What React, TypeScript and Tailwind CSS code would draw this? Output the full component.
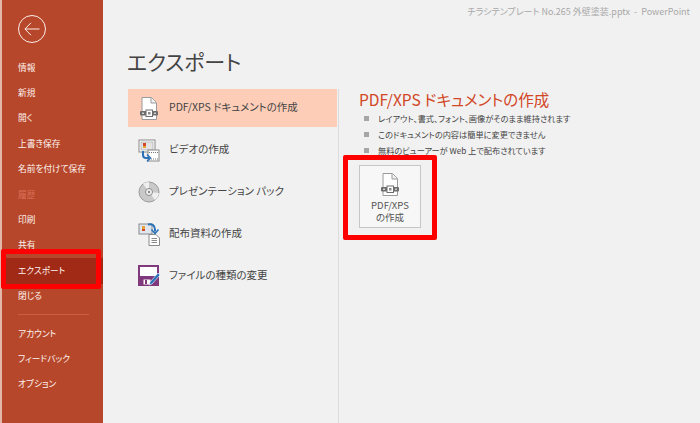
import type { ReactNode } from "react";

const font = { fontFamily: '"Noto Sans CJK JP", "Noto Sans", sans-serif' };

function PdfIcon({ w = 18 }: { w?: number }) {
  return (
    <svg width={w} height={(w * 23) / 18} viewBox="0 0 18 23" fill="none">
      <path d="M2 .5h9.500L16.500 5.500V22.500H2z" fill="#fff" stroke="#9a9a9a" />
      <path d="M11 .5v5.500h5.500" fill="#f1f1f1" stroke="#9a9a9a" />
      <rect x="0" y="14" width="18" height="4.500" rx="1" fill="#6e6e6e" />
      <rect x="6" y="13" width="6.500" height="6.500" fill="#fff" stroke="#6e6e6e" />
      <rect x="8" y="15" width="2.500" height="2.500" fill="#8a8a8a" />
      <rect x="2" y="15.700" width="2" height="1" fill="#fff" />
      <rect x="14" y="15.700" width="2" height="1" fill="#fff" />
    </svg>
  );
}

function VideoIcon() {
  return (
    <svg width="22" height="23" viewBox="0 0 22 23" fill="none">
      <rect x="1" y="1" width="16" height="12" fill="#fff" stroke="#8a8a8a" />
      <rect x="3" y="3" width="12" height="8" fill="#e4e4e4" stroke="#a8a8a8" strokeWidth=".7" />
      <rect x="5" y="4" width="3" height="3" fill="#d24726" />
      <rect x="5" y="7" width="3" height="2" fill="#e8a33d" />
      <rect x="10" y="11" width="11" height="11" fill="#fff" stroke="#8a8a8a" />
      <path d="M11 13.500h9M11 20h9" stroke="#777" strokeDasharray="1 1" />
      <path d="M5 12v4c0 2 1 3 3 3h3" stroke="#2a72b8" strokeWidth="2" />
      <path d="M9 15.500l3.500 3.500-3.500 3.500" stroke="#2a72b8" strokeWidth="1.500" />
    </svg>
  );
}

function DiscIcon() {
  return (
    <svg width="22" height="22" viewBox="0 0 22 22" fill="none">
      <circle cx="11" cy="11" r="10" fill="#c9c9c9" stroke="#9a9a9a" />
      <path d="M11 11L5 2.800A10 10 0 0 1 11 1zM11 11l10 1a10 10 0 0 1-4 7z" fill="#efefef" />
      <circle cx="11" cy="11" r="3.500" fill="#f1f1f1" stroke="#8a8a8a" />
      <circle cx="11" cy="11" r="1.200" fill="#8a8a8a" />
    </svg>
  );
}

function HandoutIcon() {
  return (
    <svg width="23" height="23" viewBox="0 0 23 23" fill="none">
      <rect x="1" y="1" width="13" height="10" fill="#dfe6ee" stroke="#8a8a8a" />
      <rect x="4" y="3" width="3" height="3" fill="#e8a33d" />
      <rect x="4" y="6" width="3" height="2" fill="#d24726" />
      <path d="M10 1.500c4-1 7 1 7 5v2" stroke="#2a72b8" strokeWidth="2" />
      <path d="M13.500 6.500l3.500 4 3.500-4" stroke="#2a72b8" strokeWidth="1.500" />
      <path d="M11 11.500h7l3.500 3.500v7.500H11z" fill="#fff" stroke="#8a8a8a" />
      <path d="M13.500 15.500h5.500M13.500 17.500h5.500M13.500 19.500h5.500" stroke="#8a8a8a" />
    </svg>
  );
}

function SaveAsIcon() {
  return (
    <svg width="23" height="22" viewBox="0 0 23 22" fill="none">
      <path d="M1 1h19v19H1z" fill="#fff" stroke="#80397b" strokeWidth="2" />
      <rect x="2" y="11" width="17" height="8" fill="#80397b" />
      <rect x="5" y="14" width="8" height="6" fill="#fff" stroke="#80397b" />
      <rect x="7" y="15" width="2" height="4" fill="#80397b" />
      <path d="M12 17l8-9 2 2-8 9-3 1z" fill="#2a72b8" stroke="#fff" strokeWidth=".6" />
    </svg>
  );
}

function SideItem({ label, dim, active }: { label: string; dim?: boolean; active?: boolean }) {
  return (
    <div
      className={`flex h-[25.400px] items-center pb-[1px] pl-[16px] text-[8.700px] [font-feature-settings:'palt'] ${dim ? "text-[#d9705a]" : "text-[#fdf3ef]"} ${active ? "bg-[#a02a15]" : ""}`}
    >
      {label}
    </div>
  );
}

function ExportRow({ icon, label, active }: { icon: ReactNode; label: string; active?: boolean }) {
  return (
    <div className={`flex h-[38px] items-center ${active ? "bg-[#fdcdb8]" : ""}`}>
      <div className="flex w-[41px] justify-center pl-[1px]">{icon}</div>
      <span className="pb-[2px] text-[10.500px] text-[#444444] [font-feature-settings:'palt']">{label}</span>
    </div>
  );
}

function Bullet({ children }: { children: ReactNode }) {
  return (
    <li className="flex h-[16px] items-center text-[8.200px] text-[#444444] [font-feature-settings:'palt']">
      <span className="mr-[9px] ml-[5px] h-[5px] w-[5px] bg-[#a6a6a6]" />
      {children}
    </li>
  );
}

export default function App() {
  return (
    <div className="relative flex h-[423px] w-[700px] overflow-hidden bg-[#f1f1f1]" style={font}>
      {/* backstage nav */}
      <div className="flex h-full w-[103px] flex-col border-l-[2px] border-[#e3b8aa] bg-[#b7472a]">
        <div className="mt-[15px] ml-[16px] flex h-[28px] w-[28px] items-center justify-center rounded-full border-[1.500px] border-[#fbeee9]">
          <svg width="16" height="14" viewBox="0 0 16 14" fill="none" stroke="#fbeee9" strokeWidth="1">
            <path d="M15.500 7H1M7 .8L.9 7 7 13.200" />
          </svg>
        </div>
        <div className="mt-[12px]">
          <SideItem label="情報" />
          <SideItem label="新規" />
          <SideItem label="開く" />
          <SideItem label="上書き保存" />
          <SideItem label="名前を付けて保存" />
          <SideItem label="履歴" dim />
          <SideItem label="印刷" />
          <SideItem label="共有" />
          <SideItem label="エクスポート" active />
          <SideItem label="閉じる" />
        </div>
        <div className="mt-[5px] mr-[14px] ml-[16px] h-[1px] bg-[#cc5f42]" />
        <div className="mt-[6px]">
          <SideItem label="アカウント" />
          <SideItem label="フィードバック" />
          <SideItem label="オプション" />
        </div>
      </div>

      {/* main */}
      <div className="flex-1">
        <div className="flex h-[17px] items-center justify-end pt-[7px] pr-[10px] text-[9px] text-[#a8a8a8] [font-feature-settings:'palt']">
          チラシテンプレート No.265 外壁塗装.pptx&nbsp;&nbsp;-&nbsp;&nbsp;PowerPoint
        </div>
        <h1 className="mt-[27px] ml-[24px] h-[45px] text-[21px] leading-[34px] text-[#444444] [font-feature-settings:'palt']">
          エクスポート
        </h1>
        <div className="flex">
          <div className="ml-[25px] flex w-[209px] flex-col gap-[4px]">
            <ExportRow icon={<PdfIcon />} label="PDF/XPS ドキュメントの作成" active />
            <ExportRow icon={<VideoIcon />} label="ビデオの作成" />
            <ExportRow icon={<DiscIcon />} label="プレゼンテーション パック" />
            <ExportRow icon={<HandoutIcon />} label="配布資料の作成" />
            <ExportRow icon={<SaveAsIcon />} label="ファイルの種類の変更" />
          </div>
          <div className="ml-[1px] h-[334px] w-[1px] bg-[#dcdcdc]" />
          <div className="ml-[20px] flex-1">
            <h2 className="text-[15.500px] leading-[20px] text-[#d24726] [font-feature-settings:'palt']">
              PDF/XPS ドキュメントの作成
            </h2>
            <ul className="mt-[1px]">
              <Bullet>レイアウト、書式、フォント、画像がそのまま維持されます</Bullet>
              <Bullet>このドキュメントの内容は簡単に変更できません</Bullet>
              <Bullet>無料のビューアーが Web 上で配布されています</Bullet>
            </ul>
            <button className="mt-[7px] flex h-[63px] w-[62px] flex-col items-center border border-[#c6c6c6] bg-[#f7f7f7] pt-[7px] text-[9.500px] leading-[12px] text-[#555555] [font-feature-settings:'palt']">
              <PdfIcon w={18} />
              <span className="mt-[3px] text-center whitespace-pre-line">{"PDF/XPS\nの作成"}</span>
            </button>
          </div>
        </div>
      </div>

      {/* red callouts */}
      <div className="absolute top-[249px] left-[1px] h-[40px] w-[100px] rounded-[2px] border-[5px] border-[#ff0000]" />
      <div className="absolute top-[155px] left-[343px] h-[85px] w-[94px] rounded-[2px] border-[5px] border-[#ff0000]" />
    </div>
  );
}
